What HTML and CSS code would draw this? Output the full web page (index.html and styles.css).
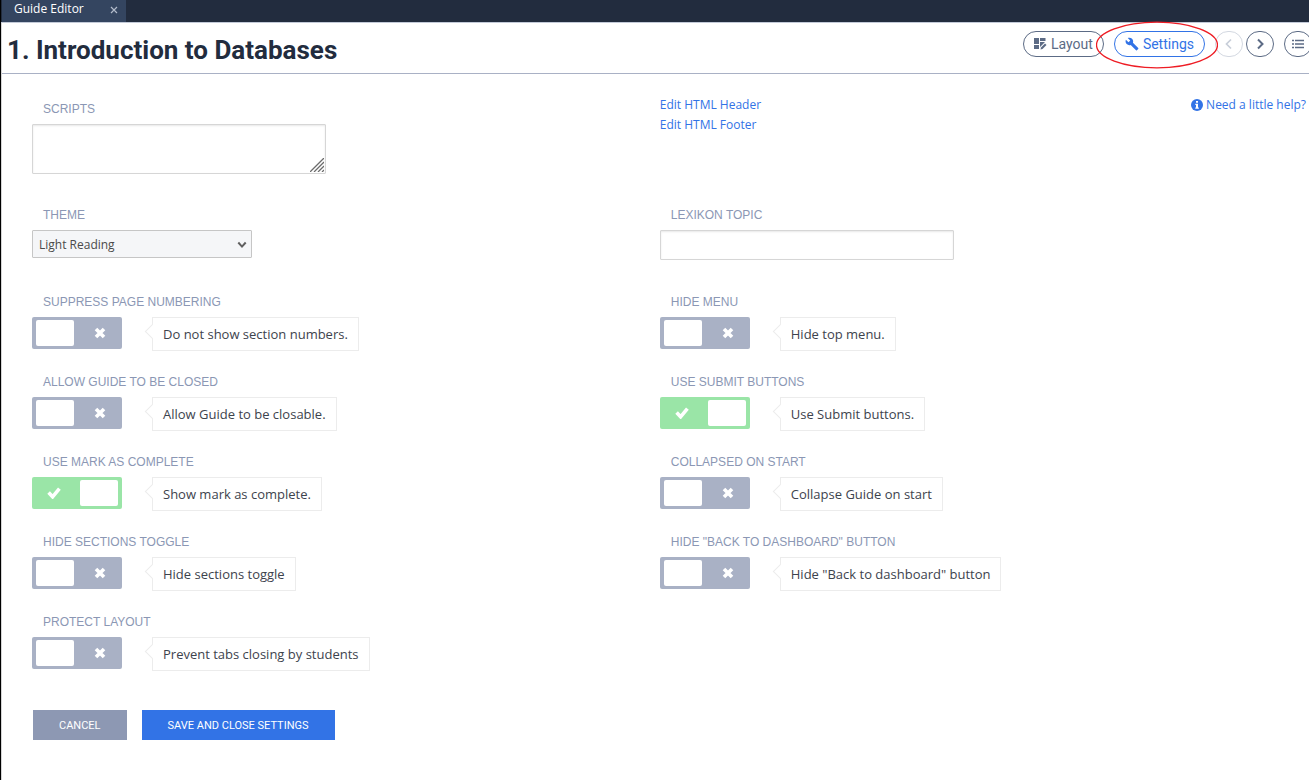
FILE: index.html
```html
<!DOCTYPE html>
<html lang="en">
<head>
<meta charset="utf-8">
<title>Guide Editor</title>
<link rel="stylesheet" href="styles.css">
</head>
<body>
<svg class="defs" aria-hidden="true">
  <symbol id="cross" viewBox="0 0 12 12"><path d="M2 2l8 8M10 2l-8 8" fill="none" stroke="#fff" stroke-width="3.600"/></symbol>
  <symbol id="check" viewBox="0 0 14 12"><path d="M1.600 5.600l4 4.200L12.400 1.600" fill="none" stroke="#fff" stroke-width="3.600"/></symbol>
</svg>
<nav class="tabs">
  <div class="tab">
    <span>Guide Editor</span>
    <button class="tab-close" aria-label="Close tab"><svg width="8" height="8" viewBox="0 0 8 8"><path d="M1 1l6 6M7 1L1 7" stroke="#b3bccb" stroke-width="1.200"/></svg></button>
  </div>
</nav>
<header class="header">
  <h1 class="title">1. Introduction to Databases</h1>
  <div class="toolbar">
    <button class="pill">
      <svg width="13" height="12" viewBox="0 0 13 12"><path d="M0 0h5v6H0zM0 7h5v4H0zM6 0h5.500v3H6zM6 4h5L6 9z" fill="#5c6b85"/><path d="M6.500 11.500l.5-2L11 5.400l1.500 1.500-4 4.100z" fill="#5c6b85"/></svg>
      Layout
    </button>
    <div class="highlighted">
      <button class="pill pill-active">
        <svg width="14" height="14" viewBox="0 0 24 24"><path d="M22.700 19l-9.100-9.100c.9-2.300.4-5-1.500-6.900-2-2-5-2.400-7.400-1.300L9 6 6 9 1.600 4.700C.4 7.100.9 10.100 2.900 12.100c1.900 1.900 4.600 2.400 6.900 1.500l9.100 9.100c.4.4 1 .4 1.400 0l2.300-2.300c.5-.4.5-1.100.1-1.400z" fill="#3273e6"/></svg>
        Settings
      </button>
      <svg class="ring" viewBox="0 0 122 48" preserveAspectRatio="none" aria-hidden="true"><ellipse cx="61" cy="24" rx="60.500" ry="22.800" fill="none" stroke="#ee1c24" stroke-width="1.300"/></svg>
    </div>
    <div class="pager">
      <button class="round" disabled aria-label="Previous"><svg width="10" height="12" viewBox="0 0 10 12"><path d="M7 1.500L2.500 6 7 10.500" fill="none" stroke="#c8ced9" stroke-width="1.700"/></svg></button>
      <button class="round" aria-label="Next"><svg width="10" height="12" viewBox="0 0 10 12"><path d="M3 1.500L7.500 6 3 10.500" fill="none" stroke="#5c6b85" stroke-width="2"/></svg></button>
    </div>
    <button class="round" aria-label="Contents"><svg width="12" height="10" viewBox="0 0 12 10"><path d="M0 1.500h2M3 1.500h9M0 5h2M3 5h9M0 8.500h2M3 8.500h9" stroke="#5c6b85" stroke-width="1.300"/></svg></button>
  </div>
</header>
<main class="content">
  <form>
    <div class="row row-intro">
      <div class="field">
        <label class="label" for="scripts">SCRIPTS</label>
        <div class="textbox-wrap">
          <textarea class="textbox textarea" id="scripts"></textarea>
          <svg class="grip" width="14" height="14" viewBox="0 0 14 14" aria-hidden="true"><path d="M0 14L14 0M4 14L14 4M8 14l6-6M12 14l2-2" stroke="#6c6c6c" stroke-width="1.300"/></svg>
        </div>
      </div>
      <div class="links">
        <div class="link-list"><a href="#header">Edit HTML Header</a><a href="#footer">Edit HTML Footer</a></div>
        <a class="help" href="#help"><svg width="12" height="12" viewBox="0 0 12 12"><circle cx="6" cy="6" r="6" fill="#3273e6"/><path d="M5 2h2v1.800H5zM4.300 4.800H7v3.700h.8v1.200H4.300V8.500H5V6h-.7z" fill="#fff"/></svg>Need a little help?</a>
      </div>
    </div>
    <div class="row row-theme">
      <div class="field">
        <label class="label" for="theme">THEME</label>
        <div class="select-wrap">
          <select class="select" id="theme"><option>Light Reading</option></select>
          <svg class="caret" width="10" height="8" viewBox="0 0 10 8" aria-hidden="true"><path d="M1.300 1.500L5 5.600l3.700-4.100" fill="none" stroke="#606060" stroke-width="2"/></svg>
        </div>
      </div>
      <div class="field">
        <label class="label" for="topic">LEXIKON TOPIC</label>
        <input class="textbox" id="topic" type="text">
      </div>
    </div>
    <div class="options">
      <div class="field"><label class="label" for="o1">SUPPRESS PAGE NUMBERING</label><div class="option"><span class="switch"><input type="checkbox" id="o1"><svg class="off"><use href="#cross"/></svg><svg class="on"><use href="#check"/></svg></span><span class="callout">Do not show section numbers.</span></div></div>
      <div class="field"><label class="label" for="o2">HIDE MENU</label><div class="option"><span class="switch"><input type="checkbox" id="o2"><svg class="off"><use href="#cross"/></svg><svg class="on"><use href="#check"/></svg></span><span class="callout">Hide top menu.</span></div></div>
      <div class="field"><label class="label" for="o3">ALLOW GUIDE TO BE CLOSED</label><div class="option"><span class="switch"><input type="checkbox" id="o3"><svg class="off"><use href="#cross"/></svg><svg class="on"><use href="#check"/></svg></span><span class="callout">Allow Guide to be closable.</span></div></div>
      <div class="field"><label class="label" for="o4">USE SUBMIT BUTTONS</label><div class="option"><span class="switch"><input type="checkbox" id="o4" checked><svg class="off"><use href="#cross"/></svg><svg class="on"><use href="#check"/></svg></span><span class="callout">Use Submit buttons.</span></div></div>
      <div class="field"><label class="label" for="o5">USE MARK AS COMPLETE</label><div class="option"><span class="switch"><input type="checkbox" id="o5" checked><svg class="off"><use href="#cross"/></svg><svg class="on"><use href="#check"/></svg></span><span class="callout">Show mark as complete.</span></div></div>
      <div class="field"><label class="label" for="o6">COLLAPSED ON START</label><div class="option"><span class="switch"><input type="checkbox" id="o6"><svg class="off"><use href="#cross"/></svg><svg class="on"><use href="#check"/></svg></span><span class="callout">Collapse Guide on start</span></div></div>
      <div class="field"><label class="label" for="o7">HIDE SECTIONS TOGGLE</label><div class="option"><span class="switch"><input type="checkbox" id="o7"><svg class="off"><use href="#cross"/></svg><svg class="on"><use href="#check"/></svg></span><span class="callout">Hide sections toggle</span></div></div>
      <div class="field"><label class="label" for="o8">HIDE "BACK TO DASHBOARD" BUTTON</label><div class="option"><span class="switch"><input type="checkbox" id="o8"><svg class="off"><use href="#cross"/></svg><svg class="on"><use href="#check"/></svg></span><span class="callout">Hide "Back to dashboard" button</span></div></div>
      <div class="field"><label class="label" for="o9">PROTECT LAYOUT</label><div class="option"><span class="switch"><input type="checkbox" id="o9"><svg class="off"><use href="#cross"/></svg><svg class="on"><use href="#check"/></svg></span><span class="callout">Prevent tabs closing by students</span></div></div>
    </div>
    <div class="actions">
      <button class="action action-cancel" type="button">CANCEL</button>
      <button class="action action-save" type="button">SAVE AND CLOSE SETTINGS</button>
    </div>
  </form>
</main>
</body>
</html>
```
FILE: styles.css
```css
* { box-sizing: border-box; }
body {
  margin: 0;
  min-height: 100vh;
  border-left: 1px solid #000;
  box-shadow: inset 1px 0 #d5d5d5;
  overflow-x: clip;
  background: #fff;
  color: #3d434d;
  font-family: "Open Sans", sans-serif;
  font-size: 13px;
}
button { cursor: pointer; margin: 0; font-family: inherit; }
svg { display: block; flex: none; }
a { color: #3273e6; text-decoration: none; }
.defs { position: absolute; width: 0; height: 0; }

.tabs { display: flex; height: 23px; padding-left: 1px; background: #222c3e; border-bottom: 1px solid #c3cad8; }
.tab {
  display: flex;
  justify-content: space-between;
  width: 124px;
  padding: 0 8px 0 12px;
  background: #344560;
  color: #fff;
  font-size: 12px;
  line-height: 18px;
}
.tab-close { height: 20px; padding: 0; border: 0; background: none; }

.header {
  display: flex;
  align-items: flex-start;
  justify-content: space-between;
  height: 51px;
  margin-left: 1px;
  padding: 8px 0 0 5px;
  border-bottom: 1px solid #a9b1c5;
}
.title { margin: 0; padding-top: 3px; color: #222c3e; font: bold 26px/32px Roboto, sans-serif; }
.toolbar { display: flex; gap: 10px; margin-right: -3px; }
.highlighted { position: relative; }
.ring { position: absolute; top: -10px; left: -18px; width: 122px; height: 48px; pointer-events: none; }
.pill {
  display: flex;
  align-items: center;
  gap: 4px;
  height: 26px;
  padding: 0 10px;
  border: 1px solid #5c6b85;
  border-radius: 13px;
  background: #fff;
  color: #5c6b85;
  font: 14px/24px Roboto, sans-serif;
}
.pill-active { border-color: #3273e6; color: #3273e6; }
.pager { display: flex; gap: 3px; }
.round {
  display: flex;
  align-items: center;
  justify-content: center;
  width: 28px;
  height: 26px;
  padding: 0;
  border: 1px solid #5c6b85;
  border-radius: 14px;
  background: #fff;
}
.round:disabled { border-color: #d3d8e1; }

.content { padding: 21px 3px 40px 31px; }
.row, .options { display: grid; grid-template-columns: 34fr 35fr; }
.row-intro { margin-bottom: 33px; }
.row-intro .field { padding-top: 6px; }
.row-theme { margin-bottom: 34px; }
.options { row-gap: 23px; }
.field { display: flex; flex-direction: column; align-items: flex-start; gap: 7px; }
.label { padding-left: 11px; color: #8b97b4; font: 12px/16px "Liberation Sans", sans-serif; }
.links { display: flex; align-items: flex-start; justify-content: space-between; font-size: 12px; line-height: 20px; }
.link-list { display: flex; flex-direction: column; }
.help { display: flex; align-items: center; gap: 3px; }

.textbox-wrap, .select-wrap { position: relative; }
.textbox {
  display: block;
  width: 294px;
  height: 30px;
  margin: 0;
  padding: 4px 6px;
  border: 1px solid #d6d6d6;
  border-radius: 1px;
  background: #fff;
  box-shadow: inset 0 1px 2px #e8e8e8;
  font: 12px/20px "Open Sans", sans-serif;
}
.textarea { height: 50px; resize: none; }
.grip { position: absolute; right: 2px; bottom: 2px; pointer-events: none; }
.select {
  display: block;
  width: 220px;
  height: 28px;
  padding: 1px 6px 0;
  appearance: none;
  border: 1px solid #c6c6c6;
  border-radius: 1px;
  background: #f5f6f8;
  color: #4a4a4a;
  font: 12px/25px "Open Sans", sans-serif;
}
.caret { position: absolute; top: 11px; right: 5px; pointer-events: none; }

.option { display: flex; align-items: flex-start; gap: 30px; }
.switch { position: relative; display: block; width: 90px; height: 32px; }
.switch input {
  display: flex;
  width: 100%;
  height: 100%;
  margin: 0;
  padding: 3px 4px;
  appearance: none;
  border-radius: 2px;
  background: #a9b1c5;
  cursor: pointer;
}
.switch input::before { content: ""; width: 38px; background: #fff; border-radius: 2px; }
.switch input:checked { justify-content: flex-end; background: #9ae5a7; }
.switch svg { position: absolute; top: 10px; height: 12px; pointer-events: none; }
.off { left: 62px; width: 12px; }
.on { left: 15px; width: 14px; }
.switch input:not(:checked) ~ .on, .switch input:checked ~ .off { display: none; }
.callout {
  position: relative;
  padding: 0 10px;
  border: 1px solid #ececec;
  background: #fff;
  line-height: 32px;
}
.callout::before {
  content: "";
  position: absolute;
  top: 8px;
  left: -6px;
  width: 10px;
  height: 10px;
  border: solid #ececec;
  border-width: 0 0 1px 1px;
  background: #fff;
  transform: rotate(45deg);
}

.actions { display: flex; gap: 15px; margin: 39px 0 0 1px; }
.action {
  height: 30px;
  padding: 1px 26px 0;
  border: 0;
  color: #fff;
  font: 11px/29px Roboto, sans-serif;
}
.action-cancel { background: #8d98b3; }
.action-save { background: #3273e6; }
```
